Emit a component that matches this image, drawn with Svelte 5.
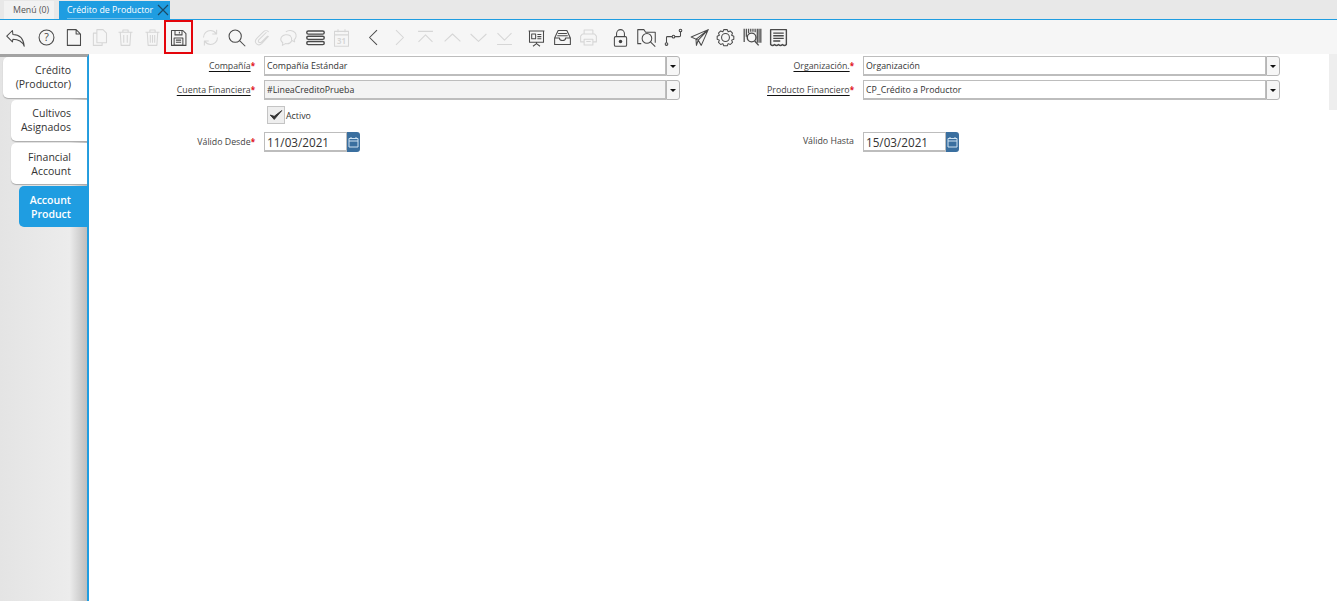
<script>
	const tabs = [
		{ id: 1, lines: ['Crédito', '(Productor)'], level: 0 },
		{ id: 2, lines: ['Cultivos', 'Asignados'], level: 1 },
		{ id: 3, lines: ['Financial', 'Account'], level: 1 },
		{ id: 4, lines: ['Account', 'Product'], level: 2, active: true },
	];
</script>

<div class="page">
	<!-- window tabs -->
	<div class="tabbar">
		<div class="wintab">Menú (0)</div>
		<div class="wintab current">
			<span class="wintitle">Crédito de Productor</span>
			<svg class="close" width="12" height="12" viewBox="0 0 12 12"><path d="M1 1l10 10M11 1L1 11" stroke="#1c4a66" stroke-width="1.2" fill="none" /></svg>
		</div>
	</div>

	<!-- toolbar -->
	<div class="toolbar">
		<div class="group">
			<span class="tb"><svg viewBox="0 0 24 24"><path class="on" d="M2 10.500L8.500 4l.5 4.500C16 8.500 21 12 22 22c-2.500-6-7-8-13-8l-.5 3z" /></svg></span>
		</div>
		<div class="group">
			<span class="tb"><svg viewBox="0 0 24 24"><circle class="on" cx="12" cy="12" r="8.500" /><text x="12" y="16" text-anchor="middle" class="mark">?</text></svg></span>
			<span class="tb"><svg viewBox="0 0 24 24"><path class="on" d="M5 3h10l5 5v13H5zM15 3v5h5" /></svg></span>
			<span class="tb"><svg viewBox="0 0 24 24"><path class="off" d="M9 3h7l4 4v11H9zM9 7H5v14h10v-3" /></svg></span>
			<span class="tb"><svg viewBox="0 0 24 24"><path class="off" d="M4 6h16M9 6V3.500h6V6M6 6l1 15h10l1-15M10 9v9M14 9v9" /></svg></span>
			<span class="tb"><svg viewBox="0 0 24 24"><path class="off" d="M4 6h16M9 6V3.500h6V6M6 6l1 15h10l1-15M9.500 9v9M12 9v9M14.500 9v9" /></svg></span>
			<span class="tb save"><svg viewBox="0 0 24 24"><path class="on" d="M4 4h13l3.500 3.500V21H4zM8 4v5h8V4M13 5.500v2" /><path class="on" d="M7 12.500h10V21H7zM9 15h6M9 17.500h6" /></svg></span>
		</div>
		<div class="group">
			<span class="tb"><svg viewBox="0 0 24 24"><path class="off" d="M4 12c0-5 4-8 8-8 3 0 5 1.500 6.500 3.500M20 12c0 5-4 8-8 8-3 0-5-1.500-6.500-3.500M19 3v5h-5M5 21v-5h5" /></svg></span>
			<span class="tb"><svg viewBox="0 0 24 24"><circle class="on" cx="10.500" cy="10.500" r="7" /><path class="on" d="M15.500 15.500L22 22" /></svg></span>
			<span class="tb"><svg viewBox="0 0 24 24"><path class="off" d="M19 5.500c-2-2-4.500-1.500-6 0L5.500 13c-2.500 2.500-2 5 0 6.500s4 1 5.500-.5l8-8.500M16.500 6L8 14.500c-1 1-1 2.500 0 3s2 .5 3-.5l7-7" /></svg></span>
			<span class="tb"><svg viewBox="0 0 24 24"><path class="off" d="M9 5.500c3-2.500 8-2 10.500 1 2 2.500 1.500 6-1 8l.5 2.500-3-1.500M14 10c-3-2-8-1.500-10 1.500-1.500 2.500-.5 5 1.500 6.500L5 21l3.500-2c3 .5 6-.5 7-3 .5-2 0-4.500-1.500-6z" /></svg></span>
			<span class="tb"><svg viewBox="0 0 24 24"><rect class="on thick" x="2" y="4.500" width="20" height="3.600" rx="1.800" /><rect class="on thick" x="2" y="10.500" width="20" height="3.600" rx="1.800" /><rect class="on thick" x="2" y="16.500" width="20" height="3.600" rx="1.800" /></svg></span>
			<span class="tb"><svg viewBox="0 0 24 24"><path class="off" d="M4 5h16v17H4zM4 9h16M8 2.500V6M16 2.500V6" /><text x="12" y="19" text-anchor="middle" class="cal">31</text></svg></span>
		</div>
		<div class="group">
			<span class="tb"><svg viewBox="0 0 24 24"><path class="on" d="M16 3.500L7.500 12l8.500 8.500" /></svg></span>
			<span class="tb"><svg viewBox="0 0 24 24"><path class="off" d="M8 3.500l8.500 8.500L8 20.500" /></svg></span>
			<span class="tb"><svg viewBox="0 0 24 24"><path class="off" d="M3.500 5h17M4 17l8-8 8 8" /></svg></span>
			<span class="tb"><svg viewBox="0 0 24 24"><path class="off" d="M3 16.500l9-8.500 9 8.500" /></svg></span>
			<span class="tb"><svg viewBox="0 0 24 24"><path class="off" d="M3 8l9 8.500L21 8" /></svg></span>
			<span class="tb"><svg viewBox="0 0 24 24"><path class="off" d="M3.500 20h17M4 7l8 8 8-8" /></svg></span>
		</div>
		<div class="group">
			<span class="tb"><svg viewBox="0 0 24 24"><path class="on" d="M3 4.500h18M4 4.500v13h16v-13M12 17.500v2M8 22l4-3 4 3M6.500 8h4.500v5.500H6.500zM13 8.500h4.500M13 11h4.500M13 13.500h4.500" /></svg></span>
			<span class="tb"><svg viewBox="0 0 24 24"><path class="on" d="M3 12.500L7 4h10l4 8.500V20H3zM3 12.500h5.500c0 2 1.500 3 3.500 3s3.500-1 3.500-3H21M7 7.500h10M6 10h12" /></svg></span>
			<span class="tb"><svg viewBox="0 0 24 24"><path class="off" d="M7 8V3.500h10V8M5 8h14l2 2.500V17h-4M7 17H3v-6.500L5 8M7 14h10v6.500H7zM9.500 16.500h5" /></svg></span>
		</div>
		<div class="group">
			<span class="tb"><svg viewBox="0 0 24 24"><rect class="on" x="5" y="11" width="14" height="11" rx="1.500" /><path class="on" d="M7.500 11V7.500a4.500 4.500 0 0 1 9 0V11" /><circle class="dot" cx="12" cy="16.500" r="2" /></svg></span>
			<span class="tb"><svg viewBox="0 0 24 24"><path class="on" d="M6 19H2V3h7l2 3h11v12" /><circle class="on" cx="12.500" cy="13" r="5.500" /><path class="on" d="M16.500 17L22 22.500" /></svg></span>
			<span class="tb"><svg viewBox="0 0 24 24"><circle class="on" cx="4" cy="19.500" r="1.500" /><circle class="on" cx="12" cy="11" r="1.500" /><circle class="on" cx="20" cy="4" r="1.500" /><path class="on" d="M4 18v-6c0-.800.500-1 1-1h5.500M13.500 11h5c1 0 1.500-.500 1.500-1V5.500" /></svg></span>
			<span class="tb"><svg viewBox="0 0 24 24"><path class="on" d="M2.500 11.500L22 3 14 21l-3.500-6zM22 3L10.500 15l-2 6-.5-6.800z" /></svg></span>
			<span class="tb"><svg viewBox="0 0 24 24"><path class="on" d="M10 3h4l1 2.500 2.500-1L20 7l-1 2.500 2.500 1v3.500L19 15l1 2.500-2.500 2.500-2.500-1-1 2.500h-4L9 19l-2.500 1L4 17.500 5 15l-2.500-1v-3.500L5 9.500 4 7l2.500-2.500L9 5.500z" /><circle class="on" cx="12" cy="12" r="4.500" /></svg></span>
			<span class="tb"><svg viewBox="0 0 24 24"><path class="bars" d="M2.500 2v15M5 2v9M7.500 2v5M10 2v3.500M12.500 2v3.500M15 2v4M17.500 2v16M19.500 2v16M21.500 2v16" /><circle class="on thick" cx="11" cy="12" r="5" /><path class="on thick" d="M14.500 16l4.500 5" /></svg></span>
			<span class="tb"><svg viewBox="0 0 24 24"><path class="on thick" d="M3 3h18v17c-1.500 1.500-3 1.500-4.500 0-1.500 1.500-3 1.500-4.500 0-1.500 1.500-3 1.500-4.500 0-1.500 1.500-3 1.500-4.500 0zM6 7h12M6 10h12M6 13h12M6 16h8" /></svg></span>
		</div>
	</div>

	<div class="body">
		<!-- record tabs -->
		<aside class="side">
			{#each tabs as tab (tab.id)}
				<div class="rectab level{tab.level}" class:active={tab.active}>
					{#each tab.lines as line}
						<span>{line}</span>
					{/each}
				</div>
			{/each}
		</aside>

		<form class="form">
			<label class="lbl" for="f1"><u>Compañía</u><i>*</i></label>
			<div class="combo"><input id="f1" value="Compañía Estándar" readonly /><span class="drop"></span></div>
			<label class="lbl" for="f2"><u>Organización.</u><i>*</i></label>
			<div class="combo"><input id="f2" value="Organización" readonly /><span class="drop"></span></div>

			<label class="lbl" for="f3"><u>Cuenta Financiera</u><i>*</i></label>
			<div class="combo"><input id="f3" class="ro" value="#LineaCreditoPrueba" readonly /><span class="drop"></span></div>
			<label class="lbl" for="f4"><u>Producto Financiero</u><i>*</i></label>
			<div class="combo"><input id="f4" value="CP_Crédito a Productor" readonly /><span class="drop"></span></div>

			<div class="check">
				<span class="box"><svg width="18" height="18" viewBox="0 0 18 18"><path d="M2.500 9l4.500 5 8.500-10-8.500 6.500z" fill="#333" stroke="#333" stroke-width="1" /></svg></span>
				<span class="checktext">Activo</span>
			</div>

			<label class="lbl dated" for="f5">Válido Desde<i>*</i></label>
			<div class="date">
				<input id="f5" value="11/03/2021" readonly />
				<span class="calbtn"><svg width="11" height="12" viewBox="0 0 11 12"><path d="M1 2.500h9v8.500H1zM1 5h9M3 1v2M8 1v2" fill="none" stroke="#cfe3f2" stroke-width="1" /></svg></span>
			</div>
			<label class="lbl dated" for="f6">Válido Hasta</label>
			<div class="date">
				<input id="f6" value="15/03/2021" readonly />
				<span class="calbtn"><svg width="11" height="12" viewBox="0 0 11 12"><path d="M1 2.500h9v8.500H1zM1 5h9M3 1v2M8 1v2" fill="none" stroke="#cfe3f2" stroke-width="1" /></svg></span>
			</div>
		</form>

		<div class="edge"></div>
	</div>
</div>

<style>
	:global(body) {
		margin: 0;
		background: #fff;
		overflow: hidden;
	}

	.page {
		height: 601px;
		display: flex;
		flex-direction: column;
		font-family: 'Open Sans', 'Noto Sans', sans-serif;
		font-size: 8.8px;
		color: #333;
	}

	/* ---------- window tabs ---------- */
	.tabbar {
		height: 19px;
		background: #e8e8e8;
		border-bottom: 1px solid #1f9de1;
		display: flex;
		align-items: flex-end;
		gap: 5px;
		padding-left: 4px;
	}

	.wintab {
		width: 50px;
		box-sizing: border-box;
		height: 18px;
		padding: 0 0 0 9px;
		display: flex;
		align-items: center;
		font-size: 8.8px;
		color: #555;
		background: #f2f2f2;
		white-space: nowrap;
	}

	.wintab.current {
		background: #1f9de1;
		color: #fff;
		gap: 4px;
		padding: 0 0 0 8px;
		width: 111px;
	}

	.wintitle {
		border-bottom: 1px solid #6dbdea;
		line-height: 15px;
		margin-top: 2px;
	}

	/* ---------- toolbar ---------- */
	.toolbar {
		height: 34px;
		background: #f6f6f6;
		display: flex;
		gap: 5.4px;
		padding-left: 2px;
	}

	.group {
		display: flex;
	}

	.tb {
		width: 26.3px;
		display: flex;
		align-items: center;
		justify-content: center;
		position: relative;
	}

	.tb svg {
		width: 21px;
		height: 21px;
		overflow: visible;
	}

	.save::after {
		content: '';
		position: absolute;
		top: 0;
		bottom: 0;
		left: -1.500px;
		right: -2px;
		border: 2px solid #e4050b;
	}

	.on,
	.off {
		fill: none;
		stroke-width: 1.2;
		stroke-linejoin: round;
	}

	.on {
		stroke: #4a4a4a;
	}

	.off {
		stroke: #d6d6d6;
	}

	.thick {
		stroke-width: 1.600;
	}

	.bars {
		fill: none;
		stroke: #555;
		stroke-width: 1.500;
	}

	.dot {
		fill: #3f3f3f;
	}

	.mark {
		font-family: 'Open Sans', sans-serif;
		font-size: 12px;
		fill: #3f3f3f;
	}

	.cal {
		font-family: 'Open Sans', sans-serif;
		font-size: 9px;
		font-weight: 700;
		fill: #d6d6d6;
	}

	/* ---------- body ---------- */
	.body {
		flex: 1;
		display: flex;
		min-height: 0;
	}

	.side {
		width: 89px;
		flex: none;
		box-sizing: border-box;
		background: linear-gradient(90deg, #e4e4e4 0, #ececec 80%, #bdbdbd 100%);
		border-top: 3px solid #a3a3a3;
		border-right: 2px solid #1f9de1;
		display: flex;
		flex-direction: column;
		align-items: flex-end;
		gap: 2px;
		font-size: 10.5px;
		line-height: 14px;
		color: #333;
	}

	.rectab {
		height: 41px;
		box-sizing: border-box;
		padding: 0 16px 2px 0;
		display: flex;
		flex-direction: column;
		justify-content: center;
		align-items: flex-end;
		background: #fff;
		border-radius: 5px 0 0 5px;
		box-shadow: 0 1px 1px #aaa;
	}

	.rectab:nth-child(n + 3) {
		padding-bottom: 0;
	}

	.level0 {
		width: 84px;
	}

	.level1 {
		width: 76px;
	}

	.level2 {
		width: 68px;
	}

	.rectab.active {
		background: #1f9de1;
		color: #fff;
		font-weight: 600;
		box-shadow: none;
	}

	.form {
		flex: 1;
		padding-top: 2px;
		display: grid;
		grid-template-columns: 166px 425px 174px 426px;
		grid-auto-rows: 20px;
		row-gap: 4px;
		align-content: start;
	}

	.lbl {
		text-align: right;
		line-height: 19px;
		color: #444;
	}

	.lbl u {
		text-decoration-color: #111;
		text-underline-offset: 2px;
	}

	.lbl i {
		color: #e01020;
		font-style: normal;
		font-weight: 700;
		font-size: 8px;
	}

	input {
		font: inherit;
		color: inherit;
		height: 20px;
		box-sizing: border-box;
		border: 1px solid #bdbdbd;
		border-bottom-width: 2px;
		padding: 0 2px;
		outline: none;
		background: #fff;
		min-width: 0;
	}

	input.ro {
		background: #f3f3f3;
	}

	.combo {
		display: flex;
		margin-left: 9px;
	}

	.combo input {
		flex: 1;
	}

	.drop {
		width: 14px;
		flex: none;
		box-sizing: border-box;
		height: 20px;
		background: #f6f6f6;
		border: 1px solid #b5b5b5;
		border-radius: 0 3px 3px 0;
		display: flex;
		align-items: center;
		justify-content: center;
	}

	.drop::after {
		content: '';
		border: 3px solid transparent;
		border-top-color: #111;
		border-bottom: 0;
	}

	.check {
		grid-column: 2 / 5;
		display: flex;
		align-items: center;
		gap: 1px;
		margin: 2px 0 0 12px;
	}

	.checktext {
		padding-top: 1px;
	}

	.box {
		width: 18px;
		height: 18px;
		box-sizing: border-box;
		background: #eee;
		border: 1px solid #c4c4c4;
		display: flex;
		align-items: center;
		justify-content: center;
	}

	.dated {
		margin-top: 4px;
	}

	.date {
		display: flex;
		margin: 4px 0 0 9px;
		height: 20px;
	}

	.date input {
		width: 83px;
		font-size: 11.7px;
	}

	.calbtn {
		width: 13px;
		height: 20px;
		flex: none;
		background: #3a6f9f;
		border-radius: 0 3px 3px 0;
		display: flex;
		align-items: center;
		justify-content: center;
	}

	.edge {
		width: 8px;
		height: 56px;
		flex: none;
		background: #eee;
	}
</style>
